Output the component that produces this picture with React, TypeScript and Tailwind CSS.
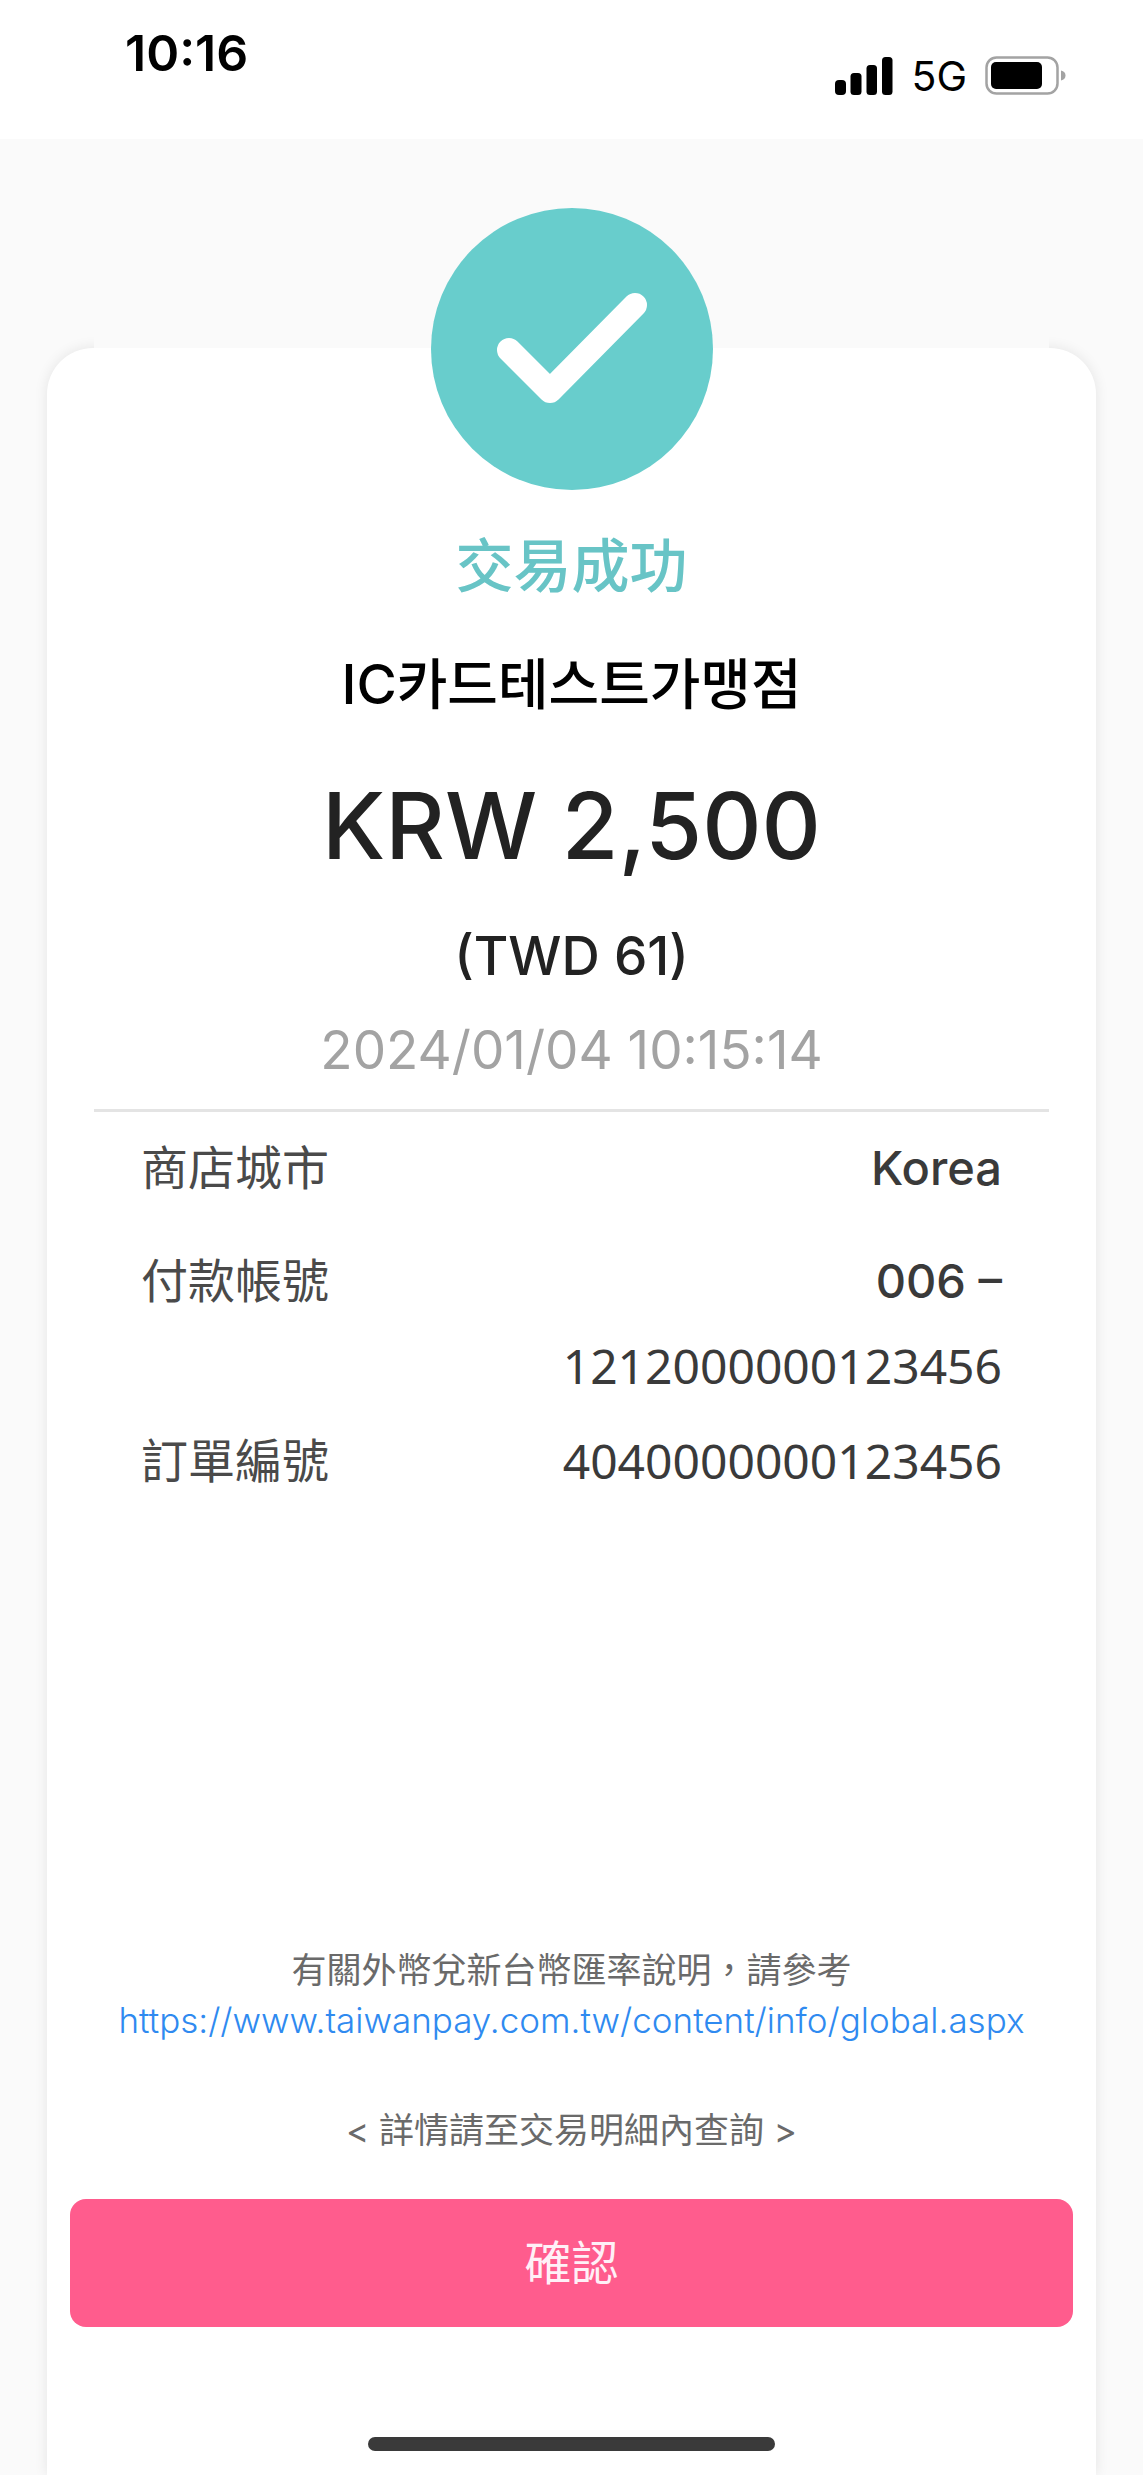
import type { ReactNode } from 'react'

interface DetailRowProps {
  label: string
  children: ReactNode
}

function SignalIcon() {
  return (
    <svg width="58" height="38" viewBox="0 0 58 38" fill="#000" aria-hidden="true">
      <rect x="0" y="23" width="11" height="15" rx="4" />
      <rect x="15.5" y="16" width="11" height="22" rx="3.5" />
      <rect x="31.5" y="8" width="10.5" height="30" rx="3.5" />
      <rect x="47" y="0" width="10.5" height="38" rx="3.5" />
    </svg>
  )
}

function BatteryIcon() {
  return (
    <svg width="82" height="40" viewBox="0 0 82 40" aria-hidden="true">
      <rect x="1.5" y="1.5" width="71" height="36" rx="10" fill="none" stroke="#a3a3a3" strokeWidth="2.5" />
      <rect x="6" y="6" width="51" height="27" rx="5" fill="#000" />
      <path d="M76 14.5 C79 15 80.5 17 80.5 19.5 C80.5 22 79 24 76 24.5 Z" fill="#a3a3a3" />
    </svg>
  )
}

function StatusBar() {
  return (
    <header className="flex h-[139px] items-start justify-between bg-white pl-[125px] pr-[76px]">
      <time className="mt-6 text-[50px] font-semibold leading-[58px] text-black">10:16</time>
      <div className="mt-[56px] flex h-10 items-center">
        <SignalIcon />
        <span className="ml-[18px] mr-[18px] text-[41px] leading-10 text-black">5G</span>
        <BatteryIcon />
      </div>
    </header>
  )
}

function SuccessBadge() {
  return (
    <svg width="282" height="282" viewBox="0 0 282 282" role="img" aria-label="交易成功">
      <circle cx="141" cy="141" r="141" fill="#68cdcc" />
      <path
        d="M78 142 L119 183 L204 97"
        fill="none"
        stroke="#fff"
        strokeWidth="24"
        strokeLinecap="round"
        strokeLinejoin="round"
      />
    </svg>
  )
}

function DetailRow({ label, children }: DetailRowProps) {
  return (
    <div className="flex justify-between leading-[85px]">
      <dt className="text-[47px] text-[#4a4a4a]">{label}</dt>
      <dd className="flex flex-col items-end text-[#3a3a3a]">{children}</dd>
    </div>
  )
}

export default function App() {
  return (
    <div
      lang="zh-Hant"
      className="flex min-h-screen flex-col bg-[#fafafa] font-['Inter','Noto_Sans_CJK_TC',sans-serif]"
    >
      <StatusBar />

      {/* Badge sits half on the page, half on the card */}
      <div className="relative z-10 mx-[94px] flex h-[209px] justify-center bg-[#fafafa] pt-[69px]">
        <SuccessBadge />
      </div>

      <main className="mx-[47px] flex flex-1 flex-col rounded-t-[46px] bg-white pt-[176px] shadow-[0_0_14px_rgba(0,0,0,0.09)]">
        {/* Summary */}
        <section className="mx-[47px] flex flex-col items-center border-b-3 border-[#e4e4e4] pb-[17px]">
          <h1 className="text-[58px] font-medium leading-[84px] text-[#68c4c6]">交易成功</h1>
          <p
            lang="ko"
            className="mt-[34px] text-[55px] font-medium leading-[84px] text-black font-['Inter','Noto_Sans_CJK_KR',sans-serif]"
          >
            IC카드테스트가맹점
          </p>
          <p className="mt-[48px] text-[92px] font-medium leading-[104px] text-[#222]">KRW 2,500</p>
          <p className="mt-[36px] text-[53px] font-medium leading-[84px] text-[#222]">(TWD 61)</p>
          <p className="mt-[10px] text-[53px] leading-[84px] text-[#a3a3a3]">2024/01/04 10:15:14</p>
        </section>

        {/* Details */}
        <dl className="mx-[94px] mt-[13px]">
          <div className="mb-7">
            <DetailRow label="商店城市">
              <span className="text-[47px] font-medium">Korea</span>
            </DetailRow>
          </div>
          <div className="mb-[10px]">
            <DetailRow label="付款帳號">
              <span className="text-[47px] font-medium">006 –</span>
              <span className="text-[48px] font-['Noto_Sans',sans-serif]">1212000000123456</span>
            </DetailRow>
          </div>
          <DetailRow label="訂單編號">
            <span className="text-[48px] font-['Noto_Sans',sans-serif]">4040000000123456</span>
          </DetailRow>
        </dl>

        {/* Footer */}
        <footer className="mt-auto flex flex-col items-center px-[23px] pb-6 text-[35px] leading-[50px] text-[#6a6a6a]">
          <p>有關外幣兌新台幣匯率說明，請參考</p>
          <a
            href="https://www.taiwanpay.com.tw/content/info/global.aspx"
            className="font-light text-[#2f8af0]"
          >
            https://www.taiwanpay.com.tw/content/info/global.aspx
          </a>
          <p className="mt-[60px]">&lt; 詳情請至交易明細內查詢 &gt;</p>
          <button
            type="button"
            className="mt-[44px] h-32 w-full rounded-2xl bg-[#ff5c8d] text-[47px] text-[#fff0f7]"
          >
            確認
          </button>
          <div className="mt-[110px] h-[14px] w-[407px] rounded-full bg-[#3a3a3a]" />
        </footer>
      </main>
    </div>
  )
}
